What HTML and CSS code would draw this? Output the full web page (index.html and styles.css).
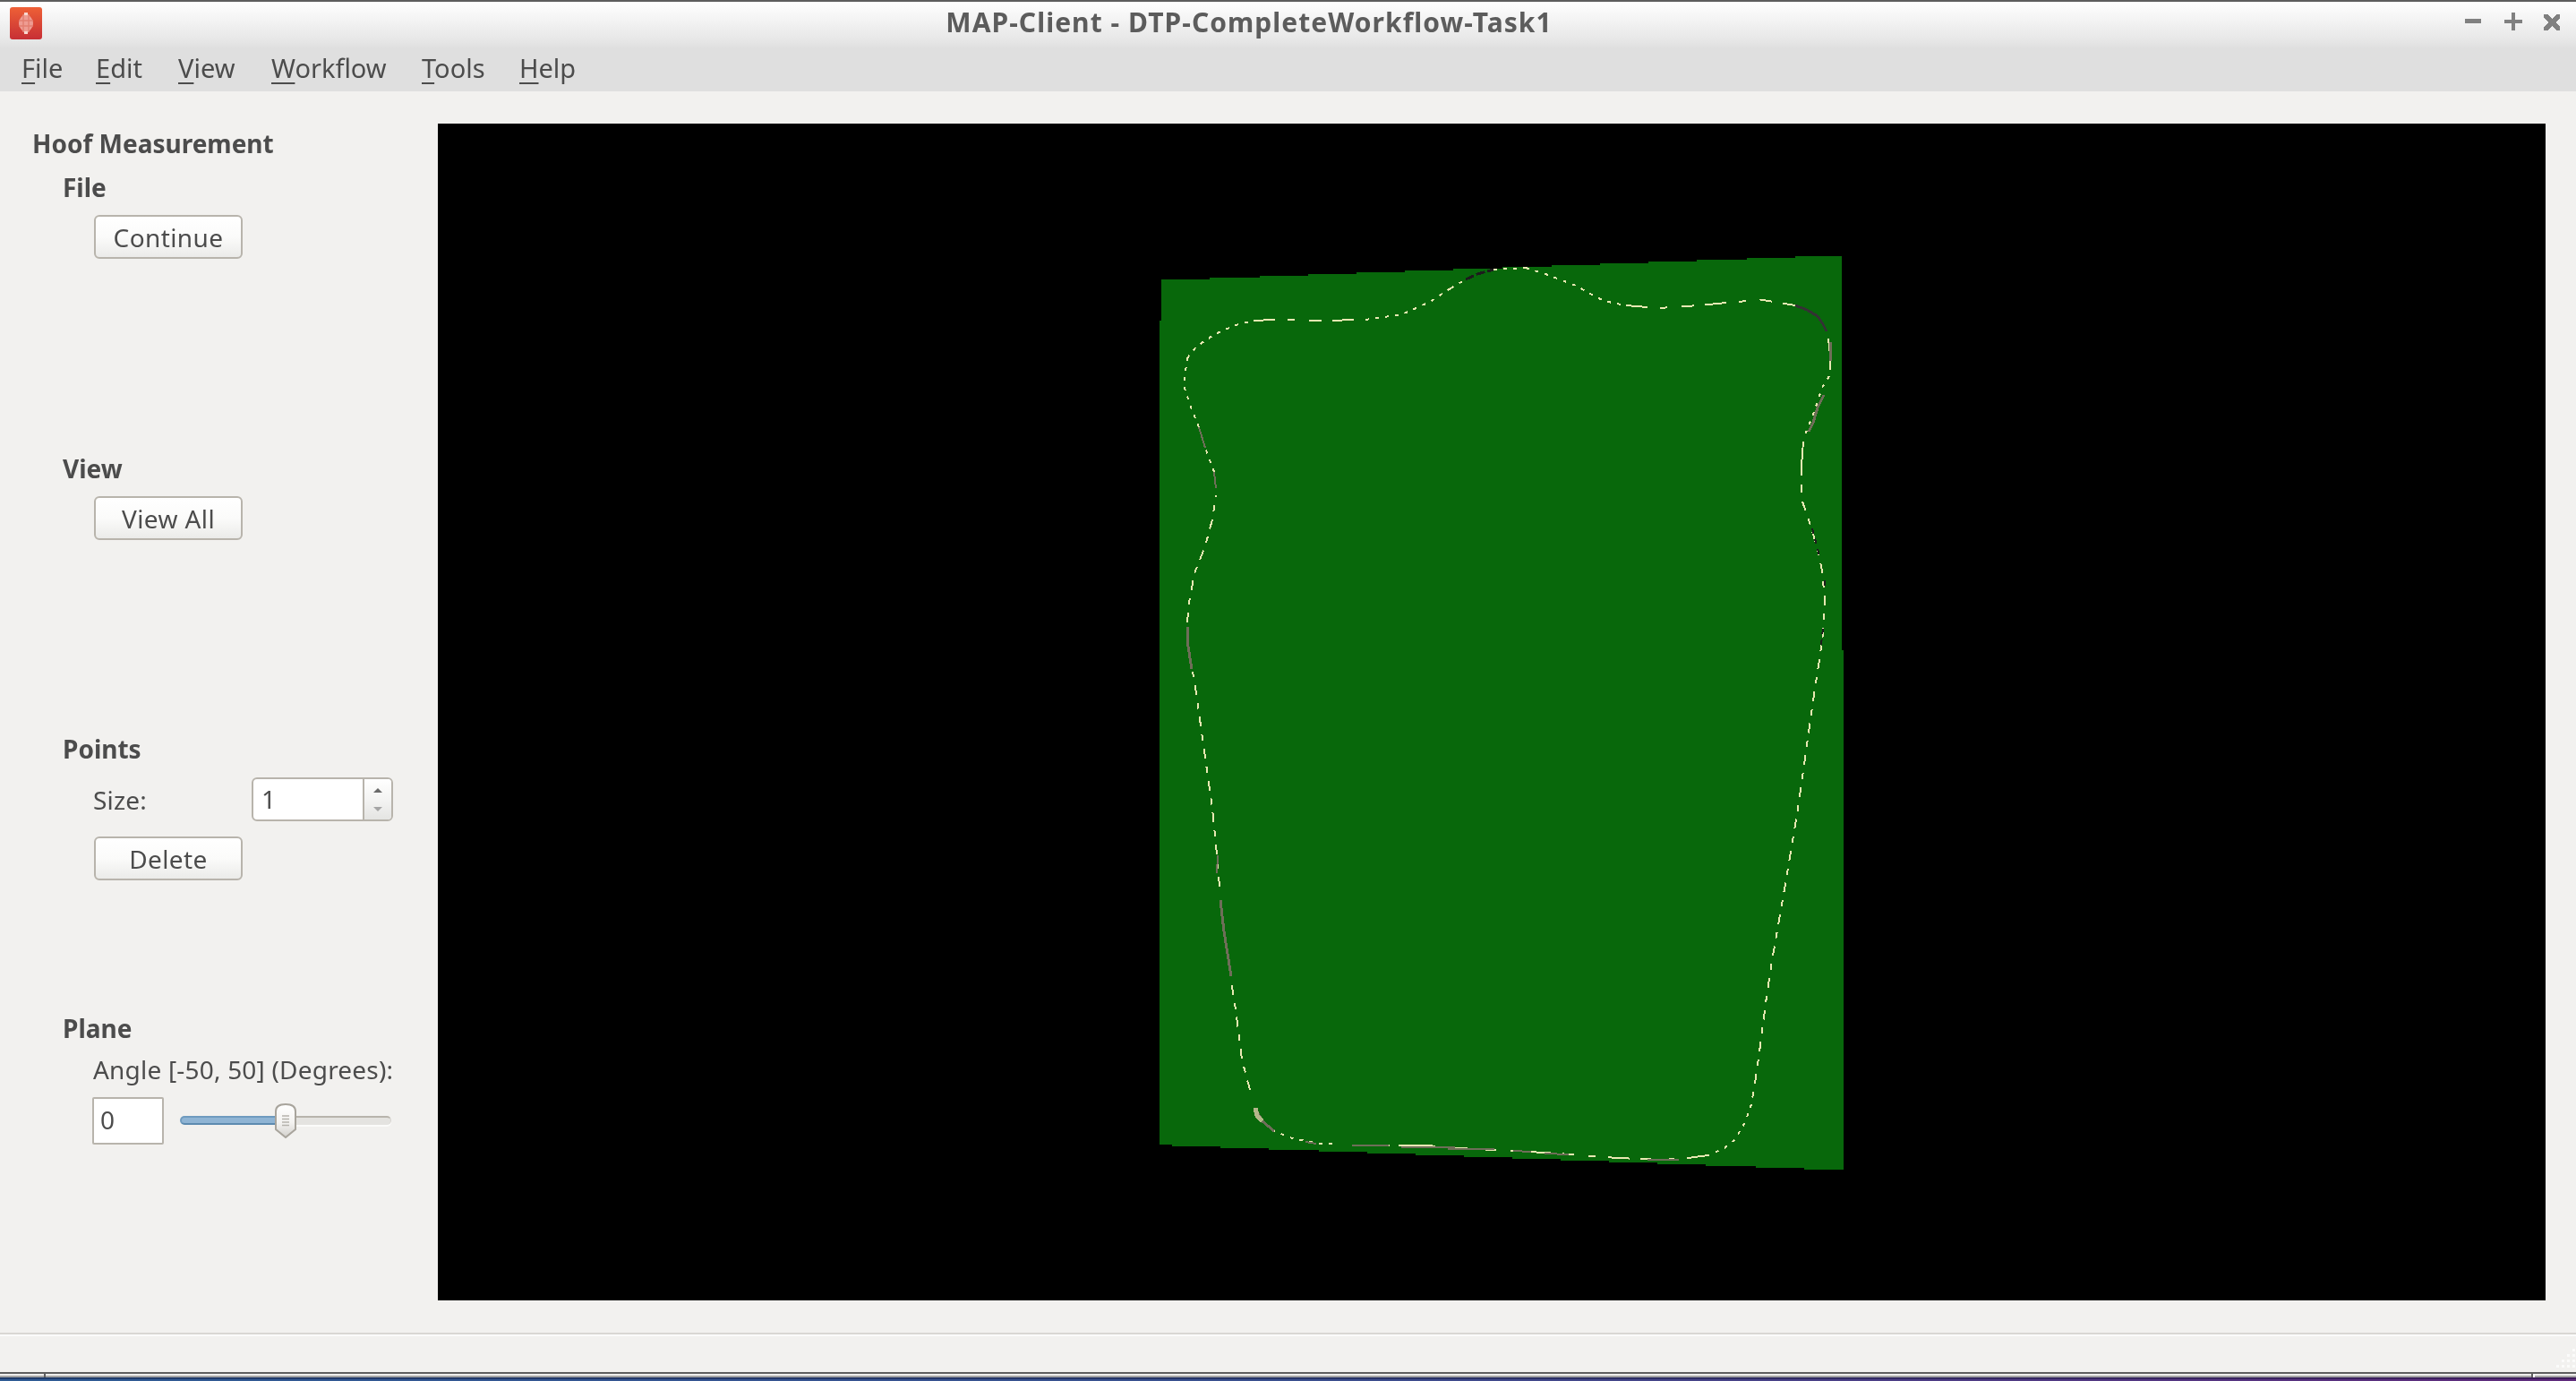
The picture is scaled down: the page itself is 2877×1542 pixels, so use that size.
FILE: index.html
```html
<!DOCTYPE html>
<html lang="en">
<head>
<meta charset="utf-8">
<title>MAP-Client - DTP-CompleteWorkflow-Task1</title>
<link rel="stylesheet" href="styles.css">
</head>
<body>
<div class="app">
  <header class="chrome">
    <div class="titlebar">
      <svg class="logo" viewBox="0 0 36 36" aria-hidden="true">
        <defs>
          <linearGradient id="logoFill" x1="0" y1="0" x2="0" y2="1">
            <stop offset="0" stop-color="#ee6036"/>
            <stop offset="1" stop-color="#c72f35"/>
          </linearGradient>
        </defs>
        <rect width="36" height="36" rx="3" fill="url(#logoFill)"/>
        <path d="M18 6C23 10 26 14 26 18C26 22 23 26 18 30C13 26 10 22 10 18C10 14 13 10 18 6Z" fill="#ee9c92"/>
        <path d="M10 15H26M10 21H26M15 8V28M21 8V28" stroke="#e27e70" stroke-width="1.4" fill="none"/>
        <path d="M18 6V9M18 27V30" stroke="#f8d8d0" stroke-width="4" fill="none"/>
      </svg>
      <div class="title">MAP-Client - DTP-CompleteWorkflow-Task1</div>
      <div class="controls">
        <svg class="ctl ctl-min" viewBox="0 0 18 5" aria-hidden="true"><rect width="18" height="5"/></svg>
        <svg class="ctl ctl-max" viewBox="0 0 20 20" aria-hidden="true"><path d="M8 0h4v8h8v4h-8v8H8v-8H0V8h8z"/></svg>
        <svg class="ctl ctl-close" viewBox="0 0 18 18" aria-hidden="true"><path d="M0 0h4l5 5 5-5h4v4l-5 5 5 5v4h-4l-5-5-5 5H0v-4l5-5-5-5z"/></svg>
      </div>
    </div>
    <nav class="menubar">
      <span class="menu m-file"><u>F</u>ile</span>
      <span class="menu m-edit"><u>E</u>dit</span>
      <span class="menu m-view"><u>V</u>iew</span>
      <span class="menu m-work"><u>W</u>orkflow</span>
      <span class="menu m-tools"><u>T</u>ools</span>
      <span class="menu m-help"><u>H</u>elp</span>
    </nav>
  </header>

  <main class="main">
    <aside class="sidebar">
      <h1 class="panel-title">Hoof Measurement</h1>
      <section class="group">
        <h2 class="group-title">File</h2>
        <button class="btn" type="button">Continue</button>
      </section>
      <section class="group">
        <h2 class="group-title">View</h2>
        <button class="btn" type="button">View All</button>
      </section>
      <section class="group">
        <h2 class="group-title title-points">Points</h2>
        <div class="size-row">
          <span class="label size-label">Size:</span>
          <div class="spin">
            <span class="spin-value">1</span>
            <div class="spin-arrows">
              <svg class="arrow" viewBox="0 0 10 5" aria-hidden="true"><path d="M5 0l5 5H0z" fill="#6a6a6a"/></svg>
              <svg class="arrow" viewBox="0 0 10 5" aria-hidden="true"><path d="M0 0h10L5 5z" fill="#a5a5a5"/></svg>
            </div>
          </div>
        </div>
        <button class="btn btn-delete" type="button">Delete</button>
      </section>
      <section class="group">
        <h2 class="group-title title-plane">Plane</h2>
        <div class="label angle-label">Angle [-50, 50] (Degrees):</div>
        <div class="plane-row">
          <div class="line-edit">0</div>
          <div class="slider">
            <div class="groove-fill"></div>
            <div class="groove-rest"></div>
            <svg class="handle" viewBox="0 0 24 39" aria-hidden="true">
              <defs>
                <linearGradient id="handleFill" x1="0" y1="0" x2="0" y2="1">
                  <stop offset="0" stop-color="#ffffff"/>
                  <stop offset="0.55" stop-color="#f4f3f1"/>
                  <stop offset="1" stop-color="#d2d0cc"/>
                </linearGradient>
              </defs>
              <path d="M1 9C1 4 5 1 12 1C19 1 23 4 23 9V29L12 38L1 29Z" fill="url(#handleFill)" stroke="#a8a49c" stroke-width="2"/>
              <path d="M8 14H16M8 17.500H16M8 21H16M8 24.500H16" stroke="#b5b2ac" stroke-width="1.500" fill="none"/>
            </svg>
          </div>
        </div>
      </section>
    </aside>

    <div class="viewport">
      <svg class="scene" viewBox="489 138 2354 1314" aria-label="3D scene">
        <path class="plane" d="M1297 312H1351V310H1407V308H1461V306H1515V304H1569V302H1623V300H1678V298H1733V296H1787V294H1841V292H1895V290H1951V288H2005V286H2057V726H2059V1306H2015V1304H1961V1302H1905V1300H1851V1298H1797V1296H1743V1294H1689V1292H1635V1290H1581V1288H1527V1286H1473V1284H1417V1282H1363V1280H1309V1278H1295V358H1297Z"/>
        <polyline class="c c-dot" points="1704,299 1729,307 1760,319 1785,333 1800,338 1816,341"/>
        <polyline class="c c-flat" points="1816,341 1852,344 1898,341 1938,337 1969,335 2005,341"/>
        <polyline class="c c-dark3" points="2005,341 2018,346 2030,353 2036,362 2040,370"/>
        <polyline class="c c-long" points="2042,378 2044,397 2044,413"/>
        <polyline class="c c-gray3" points="2044,382 2045,403"/>
        <polyline class="c c-dot" points="2043,420 2035,433 2030,448 2025,463 2016,485"/>
        <polyline class="c c-gray3" points="2037,441 2030,455 2025,472 2020,482"/>
        <polyline class="c c-long" points="2014,493 2012,520 2012,550"/>
        <polyline class="c c-dash" points="2013,560 2020,580 2030,613 2035,637 2038,670 2036,707 2032,737 2027,768 2008,903 1994,987 1979,1073 1972,1120 1966,1167 1960,1210 1956,1233"/>
        <polyline class="c c-black" points="2024,590 2030,613 2033,625"/>
        <polyline class="c c-black" points="2038,648 2038,660"/>
        <polyline class="c c-black" points="2036,702 2034,720"/>
        <polyline class="c c-dot" points="1956,1233 1949,1253 1938,1272 1926,1282 1908,1290"/>
        <polyline class="c c-flat" points="1908,1290 1885,1293 1857,1295 1806,1293 1755,1289 1693,1285 1648,1283 1576,1279"/>
        <polyline class="c c-gray" points="1875,1295 1840,1295"/>
        <polyline class="c c-gray" points="1752,1289 1725,1288"/>
        <polyline class="c c-gray" points="1710,1286 1690,1285"/>
        <polyline class="c c-gray" points="1669,1283 1617,1283"/>
        <polyline class="c c-gray" points="1625,1281 1565,1281"/>
        <polyline class="c c-long" points="1600,1279 1551,1279"/>
        <polyline class="c c-gray" points="1551,1279 1510,1279"/>
        <polyline class="c c-dot" points="1488,1277 1474,1277 1443,1271 1423,1263"/>
        <polyline class="c c-gray" points="1470,1277 1458,1275"/>
        <polyline class="c c-gray3" points="1423,1263 1410,1252 1402,1238"/>
        <polyline class="c c-wedge" points="1402,1237 1404,1246 1410,1252"/>
        <polyline class="c c-dash" points="1396,1217 1387,1183 1380,1127 1375,1095"/>
        <polyline class="c c-gray3" points="1375,1090 1371,1065 1367,1040 1363,1005"/>
        <polyline class="c c-dash" points="1362,990 1358,943 1354,903 1335,767 1332,750"/>
        <polyline class="c c-gray" points="1360,955 1359,975"/>
        <polyline class="c c-gray3" points="1331,747 1327,722 1326,700"/>
        <polyline class="c c-dash" points="1326,695 1328,673 1334,640 1346,610 1354,580 1358,553"/>
        <polyline class="c c-gray" points="1358,545 1356,527"/>
        <polyline class="c c-dot" points="1356,527 1346,500"/>
        <polyline class="c c-gray" points="1346,500 1339,477"/>
        <polyline class="c c-dot" points="1339,477 1329,452 1322,430 1326,400"/>
        <polyline class="c c-dot" points="1326,400 1336,387 1357,373 1380,363 1400,358"/>
        <polyline class="c c-flat" points="1400,358 1423,357 1474,358 1525,357"/>
        <polyline class="c c-dot" points="1525,357 1566,351 1597,337 1620,322"/>
        <polyline class="c c-black3" points="1637,312 1650,306 1668,301"/>
        <polyline class="c c-dot" points="1620,322 1637,312"/>
        <polyline class="c c-dot" points="1668,301 1704,299"/>
      </svg>
    </div>
  </main>

  <footer class="statusbar">
    <svg class="grip" viewBox="0 0 22 22" aria-hidden="true">
      <path d="M18 0h3v3h-3zM12 6h3v3h-3zM18 6h3v3h-3zM6 12h3v3H6zM12 12h3v3h-3zM18 12h3v3h-3zM0 18h3v3H0zM6 18h3v3H6zM12 18h3v3h-3zM18 18h3v3h-3z"/>
    </svg>
  </footer>

  <div class="desktop-strip">
    <div class="strip-edge"></div>
    <div class="strip-win">
      <span class="strip-seg strip-seg-a"></span>
      <span class="strip-tick"></span>
      <span class="strip-seg strip-seg-b"></span>
      <span class="strip-tick"></span>
      <span class="strip-white"></span>
      <span class="strip-seg strip-seg-c"></span>
    </div>
    <div class="strip-desk"></div>
  </div>
</div>
</body>
</html>
```
FILE: styles.css
```css
* { box-sizing: border-box; }
html, body { margin: 0; padding: 0; }
body {
  width: 2877px;
  height: 1542px;
  overflow: hidden;
  background: #f2f1ef;
  color: #4c4c4c;
  font-family: "Noto Sans", "Open Sans", sans-serif;
  font-size: 28px;
}
.app { width: 2877px; height: 1542px; display: flex; flex-direction: column; }

/* window chrome */
.chrome {
  height: 102px;
  flex: none;
  border-top: 2px solid #5e5e5e;
  background: linear-gradient(180deg, #ffffff 0, #e6e6e6 44px, #dfdfdf 52px, #dfdfdf 100%);
}
.titlebar { height: 50px; display: flex; align-items: flex-start; }
.logo { width: 36px; height: 36px; margin: 6px 0 0 11px; flex: none; }
.title {
  flex: 1;
  text-align: center;
  padding: 5px 10px 0 0;
  font-weight: 700;
  font-size: 30px;
  line-height: 36px;
  letter-spacing: 1.05px;
  color: #5c5c5c;
  filter: blur(0.4px);
}
.controls { width: 124px; flex: none; height: 50px; position: relative; display: flex; }
.ctl { fill: #808080; flex: none; shape-rendering: crispEdges; }
.ctl-min { width: 18px; height: 5px; margin-top: 19px; }
.ctl-max { width: 20px; height: 20px; margin: 12px 0 0 26px; }
.ctl-close { width: 18px; height: 18px; margin: 14px 0 0 24px; }

.menubar { height: 50px; display: flex; padding-left: 24px; }
.menu { font-size: 29px; line-height: 36px; padding-top: 6px; filter: blur(0.4px); }
.menu u { text-decoration-thickness: 2px; text-underline-offset: 5px; }
.m-file { width: 83px; }
.m-edit { width: 92px; }
.m-view { width: 104px; }
.m-work { width: 168px; }
.m-tools { width: 109px; }

/* main area */
.main { flex: none; height: 1386px; display: flex; }
.sidebar { width: 489px; flex: none; padding: 40px 0 0 36px; filter: blur(0.4px); }
.panel-title {
  margin: 0;
  height: 53px;
  font-size: 28px;
  line-height: 36px;
  font-weight: 700;
}
.group { height: 314px; padding-left: 34px; }
.group-title {
  margin: 0 0 17px;
  height: 28px;
  font-size: 28px;
  line-height: 28px;
  font-weight: 700;
}
.title-points { margin: -1px 0 18px; }
.title-plane { margin: -2px 0 19px; }
.btn {
  display: block;
  width: 166px;
  height: 49px;
  margin-left: 35px;
  padding: 0;
  border: 2px solid #b8b4ac;
  border-radius: 6px;
  background: linear-gradient(180deg, #ffffff 0, #fbfbfa 50%, #ebebe9 100%);
  color: #4c4c4c;
  font: 28px/1 "Noto Sans", "Open Sans", sans-serif;
  letter-spacing: 0.4px;
}
.label { font-size: 28px; line-height: 30px; letter-spacing: 0.2px; }
.size-row { display: flex; align-items: center; padding-left: 34px; height: 49px; }
.size-label { width: 177px; flex: none; }
.spin {
  width: 158px;
  height: 49px;
  display: flex;
  border: 2px solid #b8b4ac;
  border-radius: 6px;
  background: #ffffff;
}
.spin-value { flex: 1; padding-left: 9px; line-height: 44px; font-size: 28px; }
.spin-arrows {
  width: 32px;
  flex: none;
  border-left: 2px solid #b8b4ac;
  border-radius: 0 4px 4px 0;
  background: linear-gradient(180deg, #ffffff 0, #f4f4f3 50%, #e4e4e2 100%);
  display: flex;
  flex-direction: column;
  align-items: center;
  gap: 16px;
  padding-top: 10px;
}
.arrow { width: 10px; height: 5px; flex: none; }
.btn-delete { margin-top: 17px; }
.angle-label { padding-left: 34px; white-space: nowrap; margin: -2px 0 16px; }
.plane-row { display: flex; align-items: center; padding-left: 33px; }
.line-edit {
  width: 80px;
  height: 53px;
  flex: none;
  border: 2px solid #b8b4ac;
  border-radius: 2px;
  background: #ffffff;
  padding-left: 7px;
  font-size: 28px;
  line-height: 47px;
}
.slider { width: 236px; height: 53px; margin-left: 18px; position: relative; display: flex; align-items: center; }
.groove-fill {
  width: 108px;
  height: 10px;
  flex: none;
  margin-top: -2px;
  border: 2px solid #6f9bbf;
  border-bottom-color: #5d8bb0;
  border-radius: 5px 0 0 5px;
  background: #8fb4d4;
}
.groove-rest {
  flex: 1;
  height: 10px;
  margin-top: -2px;
  border-top: 2px solid #b8b4ac;
  border-right: 1px solid #d8d6d2;
  border-radius: 0 5px 5px 0;
  background: #e4e3e0;
  box-shadow: 0 2px 0 #fbfbfa;
}
.handle { position: absolute; left: 106px; top: 7px; width: 24px; height: 39px; }

.viewport { width: 2354px; height: 1314px; margin-top: 36px; flex: none; background: #000000; }
.scene { display: block; width: 100%; height: 100%; }
.plane { fill: #08680b; shape-rendering: crispEdges; }
.c { fill: none; stroke: #e8e8b2; stroke-width: 2; shape-rendering: crispEdges; }
.c-dot { stroke-dasharray: 4 7; }
.c-flat { stroke-dasharray: 24 14 8 16 14 12; }
.c-dash { stroke-dasharray: 11 9 7 9; }
.c-long { stroke-dasharray: 38 10; }
.c-gray { stroke: #6e6e58; }
.c-gray3 { stroke: #6e6e58; stroke-width: 3; }
.c-dark3 { stroke: #333333; stroke-width: 3; }
.c-black { stroke: #1c1c1c; stroke-dasharray: 6 6; }
.c-black3 { stroke: #1c1c1c; stroke-width: 3; stroke-dasharray: 10 3; }
.c-wedge { stroke: #b4b68a; stroke-width: 5; }

/* status bar */
.statusbar {
  height: 44px;
  flex: none;
  border-top: 2px solid #d9d7d3;
  box-shadow: inset 0 2px 0 #fbfbfa;
  display: flex;
  justify-content: flex-end;
  padding: 16px 0 0;
}
.grip { width: 22px; height: 22px; fill: #fbfbfa; }

.desktop-strip { height: 10px; flex: none; display: flex; flex-direction: column; }
.strip-edge { height: 2px; background: #5e5e5e; }
.strip-win { height: 4px; display: flex; background: linear-gradient(180deg, #f0efed 50%, #a3a3a3 50%); }
.strip-seg-a { width: 49px; flex: none; }
.strip-seg-b { flex: 1; }
.strip-seg-c { width: 46px; flex: none; }
.strip-tick { width: 2px; flex: none; background: #5e5e5e; }
.strip-white { width: 2px; flex: none; background: #ffffff; }
.strip-desk {
  height: 4px;
  background:
    linear-gradient(180deg, rgba(0,0,30,0.35) 50%, rgba(0,0,0,0) 50%),
    linear-gradient(90deg, #2f5b94 0, #3a4f8e 50%, #5f2b7b 100%);
}
```
